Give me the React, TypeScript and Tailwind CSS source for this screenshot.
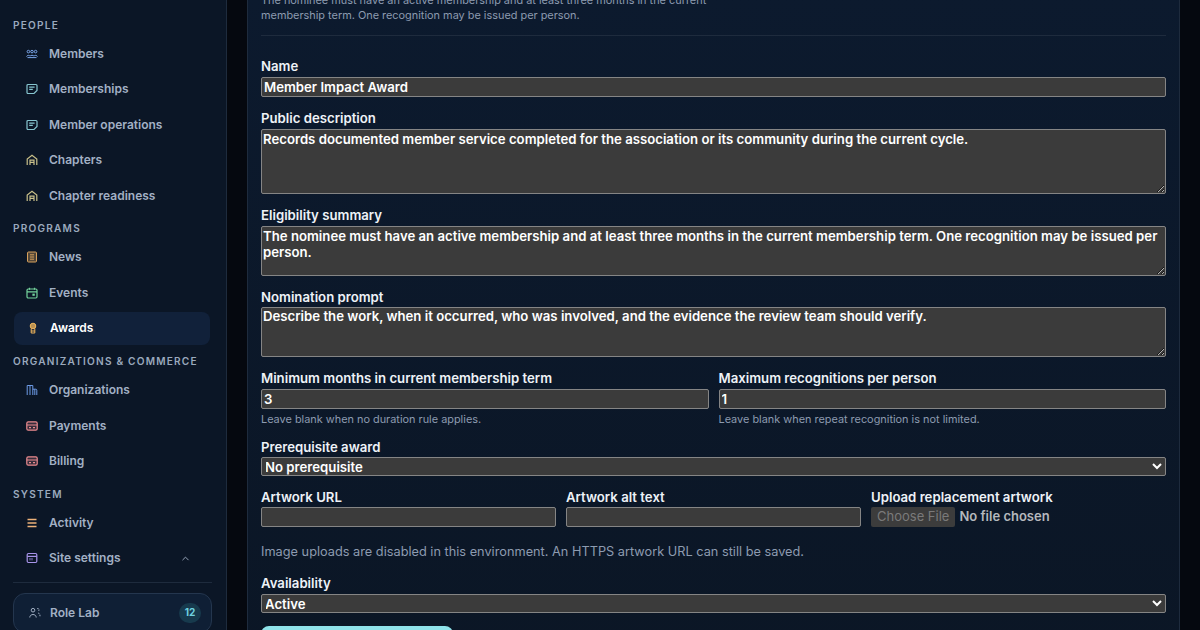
import React from "react";
import { ChevronUp } from "lucide-react";

// ── Icons ───────────────────────────────────────────────────────────────────

type IconProps = { className: string };

const base = {
	width: 12,
	height: 12,
	viewBox: "0 0 12 12",
	fill: "none",
	stroke: "currentColor",
	strokeWidth: 1,
};

function PeopleIcon({ className }: IconProps) {
	return (
		<svg {...base} className={className}>
			<circle cx="2.4" cy="3.6" r="1.3" />
			<circle cx="6" cy="3.6" r="1.3" />
			<circle cx="9.6" cy="3.6" r="1.3" />
			<path d="M.6 8.6c.5-1.6 2.8-1.6 3.4-.4.6-1.2 3.4-1.2 4 0 .6-1.2 2.9-1.2 3.4.4M1.5 9.6h9" />
		</svg>
	);
}

function NoteIcon({ className }: IconProps) {
	return (
		<svg {...base} strokeWidth={1.2} className={className}>
			<path d="M2 1.5h8a1 1 0 0 1 1 1v5L8 10.5H2a1 1 0 0 1-1-1v-7a1 1 0 0 1 1-1z" />
			<path d="M3.2 4.2h5.4M3.2 6.4h3.6" />
		</svg>
	);
}

function HouseIcon({ className }: IconProps) {
	return (
		<svg {...base} strokeWidth={1.2} className={className}>
			<path d="M1.2 11V5L6 1.2 10.8 5v6" />
			<path d="M4 11V6.2h4V11M4 8.4h4" />
		</svg>
	);
}

function BookIcon({ className }: IconProps) {
	return (
		<svg {...base} className={className}>
			<rect x="1.5" y="1" width="9" height="10" rx="1" fill="currentColor" fillOpacity=".35" />
			<path d="M4 3.8h4M4 6h4M4 8.2h4" />
		</svg>
	);
}

function CalendarIcon({ className }: IconProps) {
	return (
		<svg {...base} strokeWidth={1.2} className={className}>
			<rect x="1" y="2" width="10" height="9" rx="1.2" />
			<path d="M1 4.8h10M3.5.8v2M8.5.8v2" />
			<rect x="6.4" y="6.6" width="2.4" height="2.2" fill="currentColor" stroke="none" />
		</svg>
	);
}

function AwardIcon({ className }: IconProps) {
	return (
		<svg {...base} className={className}>
			<circle cx="6" cy="4" r="2.8" fill="currentColor" fillOpacity=".75" />
			<path d="M4.2 6.5v4.5h3.6V6.5M4.2 9h3.6" />
		</svg>
	);
}

function ColumnsIcon({ className }: IconProps) {
	return (
		<svg {...base} className={className}>
			<path d="M1.2 11V1.5h5.6V11M4 1.5V11M6.8 5.2h3a1 1 0 0 1 1 1V11M8.8 5.2V11" />
		</svg>
	);
}

function CardIcon({ className }: IconProps) {
	return (
		<svg {...base} strokeWidth={1.2} className={className}>
			<rect x=".8" y="1.8" width="10.4" height="8.4" rx="1.4" fill="currentColor" fillOpacity=".2" />
			<path d="M.8 5h10.4M3 7.6h2M7 7.6h2" />
		</svg>
	);
}

function ListIcon({ className }: IconProps) {
	return (
		<svg {...base} strokeWidth={1.3} className={className}>
			<path d="M1.5 2.5h9M1.5 6h9M1.5 9.5h9" />
		</svg>
	);
}

function WindowIcon({ className }: IconProps) {
	return (
		<svg {...base} strokeWidth={1.2} className={className}>
			<rect x="1.2" y="1.5" width="9.6" height="9" rx="1.2" />
			<path d="M1.2 4.4h9.6" />
			<rect x="3" y="6" width="4" height="2.4" fill="currentColor" fillOpacity=".4" stroke="none" />
		</svg>
	);
}

function RolesIcon({ className }: IconProps) {
	return (
		<svg {...base} className={className}>
			<circle cx="4" cy="3.2" r="1.8" />
			<path d="M.8 10.5c0-4 6.4-4 6.4 0" />
			<path d="M8.2 1.6c2-.5 2.6 1.8.8 2.6M9.2 6c1.4.4 2 1.8 1.8 3.4" strokeDasharray="1.6 .8" />
		</svg>
	);
}

// ── Sidebar ─────────────────────────────────────────────────────────────────

type NavItem = {
	label: string;
	icon: React.ComponentType<IconProps>;
	color: string;
	active?: boolean;
	chevron?: boolean;
};

const navGroups: { title: string; items: NavItem[] }[] = [
	{
		title: "PEOPLE",
		items: [
			{ label: "Members", icon: PeopleIcon, color: "text-[#7aa5e8]" },
			{ label: "Memberships", icon: NoteIcon, color: "text-[#86c5cf]" },
			{ label: "Member operations", icon: NoteIcon, color: "text-[#86c5cf]" },
			{ label: "Chapters", icon: HouseIcon, color: "text-[#c9c08a]" },
			{ label: "Chapter readiness", icon: HouseIcon, color: "text-[#c9c08a]" },
		],
	},
	{
		title: "PROGRAMS",
		items: [
			{ label: "News", icon: BookIcon, color: "text-[#d6a05c]" },
			{ label: "Events", icon: CalendarIcon, color: "text-[#74d39c]" },
			{ label: "Awards", icon: AwardIcon, color: "text-[#f2b75c]", active: true },
		],
	},
	{
		title: "ORGANIZATIONS & COMMERCE",
		items: [
			{ label: "Organizations", icon: ColumnsIcon, color: "text-[#6d9be6]" },
			{ label: "Payments", icon: CardIcon, color: "text-[#ea8a8f]" },
			{ label: "Billing", icon: CardIcon, color: "text-[#ea8a8f]" },
		],
	},
	{
		title: "SYSTEM",
		items: [
			{ label: "Activity", icon: ListIcon, color: "text-[#eeb27a]" },
			{ label: "Site settings", icon: WindowIcon, color: "text-[#a894ea]", chevron: true },
		],
	},
];

function Sidebar() {
	return (
		<aside className="w-[227px] shrink-0 h-[630px] overflow-hidden bg-[#0b1626] border-r border-[#1e2b3d] pl-[13px] pr-[14px] pt-[19px]">
			{navGroups.map((group) => (
				<div key={group.title} className="mb-[10.4px]">
					<h2 className="text-[10.1px] leading-[12px] font-semibold tracking-[0.12em] whitespace-nowrap text-[#9aa9bd] mb-[6.5px]">
						{group.title}
					</h2>
					{group.items.map((item) => (
						<a
							key={item.label}
							className={`flex items-center h-[33px] mb-[2.4px] ml-[1px] mr-[2px] rounded-lg text-[12px] font-semibold ${
								item.active ? "bg-[#11213a] text-white" : "text-[#a2b0c4]"
							}`}
						>
							<span className={`flex shrink-0 ${item.active ? "w-[36px] pl-[13px]" : "w-[35px] pl-[12px]"}`}>
								<item.icon className={item.color} />
							</span>
							<span className="flex-1">{item.label}</span>
							{item.chevron && <ChevronUp size={11} className="text-[#a2b0c4] mr-[19px]" />}
						</a>
					))}
				</div>
			))}
			<div className="border-t border-[#1e2b3d] -mt-[3.2px] pt-[10px]">
				<div className="flex items-center h-[40px] rounded-xl border border-[#24364e] bg-[#0f1f35] pl-[15px] pr-[10px]">
					<RolesIcon className="text-[#a2b0c4] mr-[9px]" />
					<span className="flex-1 text-[12px] font-semibold text-[#a2b0c4]">Role Lab</span>
					<span className="w-[22px] h-[20px] rounded-full bg-[#173a4d] text-[#6fd3e0] text-[10px] font-bold flex items-center justify-center">
						12
					</span>
				</div>
			</div>
		</aside>
	);
}

// ── Form ────────────────────────────────────────────────────────────────────

const control =
	"block w-full rounded-[2px] border border-[#858585] bg-[#3b3b3b] text-white text-[13.2px] font-semibold [color-scheme:dark]";
const inputClass = `${control} leading-[16px] h-[20px] px-[2px]`;
const areaClass = `${control} leading-[16px] px-[1px] pt-[0.5px] pb-0`;
const selectClass = `${control} h-[19px] leading-[15px] appearance-auto indent-[-1px]`;
const labelClass = "block text-[13.2px] leading-[17px] font-semibold text-[#eef2f7]";
const hintClass = "text-[10.9px] leading-[15px] text-[#8d9bb0]";

function Field({ label, className, children }: { label: string; className?: string; children: React.ReactNode }) {
	return (
		<label className={`block ${className ?? ""}`}>
			<span className={labelClass}>{label}</span>
			{children}
		</label>
	);
}

function AwardForm() {
	return (
		<main className="flex-1 min-w-0 h-[630px] overflow-hidden bg-[#05080f] px-[20px]">
			<section className="h-[700px] border-x border-[#1e2b3d] bg-[linear-gradient(180deg,#0c1a2e_0,#0b1625_100%)] px-[13px]">
				<p className="-mt-[7px] w-[460px] text-[10.9px] leading-[15px] text-[#8d9bb0]">
					The nominee must have an active membership and at least three months in the current membership term. One
					recognition may be issued per person.
				</p>
				<div className="border-t border-[#1e2b3d] mt-[11.5px] pt-[22px]">
					<Field label="Name">
						<input readOnly className={`${inputClass} mt-[2.5px]`} defaultValue="Member Impact Award" />
					</Field>
					<Field label="Public description" className="mt-[12.5px]">
						<textarea
							readOnly
							className={`${areaClass} mt-[2.5px] h-[65px]`}
							defaultValue="Records documented member service completed for the association or its community during the current cycle."
						/>
					</Field>
					<Field label="Eligibility summary" className="mt-[12.5px]">
						<textarea
							readOnly
							className={`${areaClass} mt-[2.5px] h-[50px]`}
							defaultValue="The nominee must have an active membership and at least three months in the current membership term. One recognition may be issued per person."
						/>
					</Field>
					<Field label="Nomination prompt" className="mt-[12.5px]">
						<textarea
							readOnly
							className={`${areaClass} mt-[1px] h-[50px]`}
							defaultValue="Describe the work, when it occurred, who was involved, and the evidence the review team should verify."
						/>
					</Field>
					<div className="grid grid-cols-2 gap-x-[10px] mt-[13.5px]">
						<div>
							<Field label="Minimum months in current membership term">
								<input readOnly className={`${inputClass} mt-[2px]`} defaultValue="3" />
							</Field>
							<p className={`${hintClass} mt-[3px]`}>Leave blank when no duration rule applies.</p>
						</div>
						<div>
							<Field label="Maximum recognitions per person">
								<input readOnly className={`${inputClass} mt-[2px]`} defaultValue="1" />
							</Field>
							<p className={`${hintClass} mt-[3px]`}>Leave blank when repeat recognition is not limited.</p>
						</div>
					</div>
					<Field label="Prerequisite award" className="mt-[12px]">
						<select className={`${selectClass} mt-[1px]`} defaultValue="none">
							<option value="none">No prerequisite</option>
						</select>
					</Field>
					<div className="grid grid-cols-3 gap-x-[10px] mt-[13px]">
						<Field label="Artwork URL">
							<input readOnly className={`${inputClass} mt-[1px]`} />
						</Field>
						<Field label="Artwork alt text">
							<input readOnly className={`${inputClass} mt-[1px]`} />
						</Field>
						<Field label="Upload replacement artwork">
							<input
								type="file"
								disabled
								className="block w-full h-[20px] mt-[1px] text-[13px] font-semibold text-[#b5b8bd] [color-scheme:dark] file:h-[20px] file:px-[6px] file:mr-[4px] file:rounded-[2px] file:bg-[#3c3c3c] file:text-[#7a7a7a] file:font-normal"
							/>
						</Field>
					</div>
					<p className="mt-[16px] text-[12.75px] leading-[17px] text-[#8d9bb0]">
						Image uploads are disabled in this environment. An HTTPS artwork URL can still be saved.
					</p>
					<Field label="Availability" className="mt-[15px]">
						<select className={`${selectClass} mt-[2px]`} defaultValue="active">
							<option value="active">Active</option>
						</select>
					</Field>
					<button
						type="button"
						className="block mt-[12.5px] w-[192px] h-[36px] rounded-lg bg-[#8fe3ea]"
						aria-label="Save award"
					/>
				</div>
			</section>
		</main>
	);
}

export default function App() {
	return (
		<div className="flex w-[1200px] h-[630px] overflow-hidden bg-[#05080f] font-['Inter',sans-serif]">
			<Sidebar />
			<AwardForm />
		</div>
	);
}
